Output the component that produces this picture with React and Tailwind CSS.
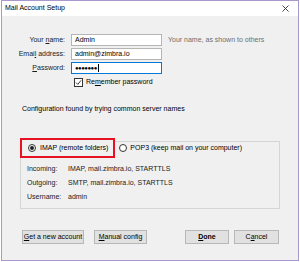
import React from 'react';

const font = { fontFamily: '"Liberation Sans", Arial, sans-serif' };

function Btn({ children, className = '', bold = false }) {
  return (
    <div
      className={`h-[14px] flex items-center justify-center whitespace-nowrap bg-[#e1e1e1] border border-[#b8b8b8] text-[7px] text-black ${bold ? 'font-bold' : ''} ${className}`}
    >
      {children}
    </div>
  );
}

function Row({ label, children }) {
  return (
    <div className="flex items-center h-[12px]">
      <div className="w-[64px] text-right text-[7px] text-[#1a1a1a] pr-[1px]">{label}</div>
      <div className="ml-[5px] flex items-center">{children}</div>
    </div>
  );
}

export default function App() {
  return (
    <div className="w-[300px] h-[262px] bg-white whitespace-nowrap" style={font}>
      <div className="ml-[1px] w-[298px] h-[261px] border border-[#a898cb] flex flex-col">
        {/* Title bar */}
        <div className="h-[15px] bg-white flex items-center justify-between pl-[3px] pr-[9px] shrink-0">
          <span className="text-[7px] text-black">Mail Account Setup</span>
          <svg width="7" height="7" viewBox="0 0 7 7">
            <path d="M0.5 0.5 L6.5 6.5 M6.5 0.5 L0.5 6.5" stroke="#333" strokeWidth="0.9" />
          </svg>
        </div>

        {/* Body */}
        <div className="flex-1 bg-[#f0f0f0] flex flex-col">
          <div className="mt-[18px] flex flex-col gap-[2px]">
            <Row label={<>Your <u>n</u>ame:</>}>
              <div className="w-[91px] h-[12px] bg-white border border-[#b5b5b5] flex items-center pl-[3px] text-[7px] text-black">
                Admin
              </div>
              <span className="ml-[6px] text-[7px] text-[#6d6d6d]">Your name, as shown to others</span>
            </Row>
            <Row label={<>Emai<u>l</u> address:</>}>
              <div className="w-[91px] h-[12px] bg-white border border-[#b5b5b5] flex items-center pl-[3px] text-[7px] text-black">
                admin@zimbra.io
              </div>
            </Row>
            <Row label={<><u>P</u>assword:</>}>
              <div className="w-[91px] h-[12px] bg-white border border-[#0078d7] flex items-center pl-[3px] text-[6px] text-black tracking-[-0.5px]">
                ●●●●●●●<span className="ml-[1px] w-[1px] h-[8px] bg-black" />
              </div>
            </Row>
          </div>

          <div className="mt-[3px] ml-[72px] flex items-center h-[10px]">
            <div className="w-[9px] h-[9px] border border-[#333] bg-white flex items-center justify-center">
              <svg width="7" height="7" viewBox="0 0 7 7">
                <path d="M1 3.6 L2.8 5.4 L6 1.4" stroke="#222" strokeWidth="0.9" fill="none" />
              </svg>
            </div>
            <span className="ml-[3px] text-[7px] text-black">Re<u>m</u>ember password</span>
          </div>

          <div className="mt-[17px] ml-[20px] text-[7px] text-black leading-[10px]">
            Configuration found by trying common server names
          </div>

          {/* Group */}
          <div className="relative mt-[24px] ml-[18px] w-[260px] flex flex-col">
            <div className="relative z-10 flex items-center h-[20px]">
              <div className="flex items-center h-[20px] border-2 border-[#e81123] bg-[#f0f0f0] pl-[6px] pr-[5px]">
                <div className="w-[8px] h-[8px] rounded-full border border-[#333] bg-white flex items-center justify-center">
                  <div className="w-[4px] h-[4px] rounded-full bg-[#222]" />
                </div>
                <span className="ml-[4px] text-[7px] text-black">IMAP (remote folders)</span>
              </div>
              <div className="flex items-center bg-[#f0f0f0] pl-[4px] pr-[2px]">
                <div className="w-[8px] h-[8px] rounded-full border border-[#333] bg-white" />
                <span className="ml-[3px] text-[7px] text-black">POP3 (keep mail on your computer)</span>
              </div>
            </div>
            <div className="-mt-[17px] border border-[#d5d5d5] pt-[22px] pb-[6px] pl-[6px] flex flex-col gap-[4px] text-[7px] text-[#1a1a1a]">
              <div className="flex h-[10px] items-center"><span className="w-[41px]">Incoming:</span><span>IMAP, mail.zimbra.io, STARTTLS</span></div>
              <div className="flex h-[10px] items-center"><span className="w-[41px]">Outgoing:</span><span>SMTP, mail.zimbra.io, STARTTLS</span></div>
              <div className="flex h-[10px] items-center"><span className="w-[41px]">Username:</span><span>admin</span></div>
            </div>
          </div>

          {/* Buttons */}
          <div className="mt-[21px] ml-[20px] flex items-center">
            <Btn className="w-[62px]"><u>G</u>et a new account</Btn>
            <Btn className="ml-[10px] w-[53px]"><u>M</u>anual config</Btn>
            <Btn className="ml-[38px] w-[44px]" bold><u>D</u>one</Btn>
            <Btn className="ml-[5px] w-[45px]">C<u>a</u>ncel</Btn>
          </div>
        </div>
      </div>
    </div>
  );
}
